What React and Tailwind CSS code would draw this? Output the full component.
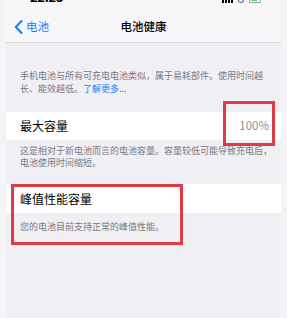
import React from 'react';

const font = { fontFamily: '"Noto Sans CJK SC", "Noto Sans", sans-serif' };

function StatusBar() {
  return (
    <div className="h-[12px] relative overflow-hidden bg-[#f7f7f9]">
      <div className="absolute left-[24px] top-[-13px] text-[13px] font-bold text-black tracking-tight">22:25</div>
      <div className="absolute right-[20px] top-[-3px] flex items-center gap-[5px]">
        <div className="flex gap-[1px]">
          <span className="w-[2px] h-[5px] bg-black" />
          <span className="w-[2px] h-[5px] bg-black" />
          <span className="w-[2px] h-[5px] bg-black" />
          <span className="w-[2px] h-[5px] bg-black" />
        </div>
        <span className="w-[6px] h-[5px] rounded-b-full border border-gray-500 border-t-0" />
        <div className="flex items-center w-[12px] h-[6px] border border-gray-400 rounded-[1px] p-[1px]">
          <span className="h-full w-[6px] bg-[#4cd964]" />
        </div>
      </div>
    </div>
  );
}

export default function App() {
  return (
    <div className="w-[287px] h-[318px] overflow-hidden bg-[#f4f4f6] relative" style={font}>
      <div className="mx-[6px] h-full bg-[#efeff4] flex flex-col">
        <StatusBar />

        <div className="h-[31px] bg-[#f7f7f9] border-b border-[#d8d8dc] flex items-center relative">
          <div className="flex items-center pl-[8px] text-[#147efb]">
            <svg width="9" height="14" viewBox="0 0 9 14" fill="none">
              <path d="M7.5 1 L1.8 7 L7.5 13" stroke="#147efb" strokeWidth="2" strokeLinecap="round" strokeLinejoin="round" />
            </svg>
            <span className="ml-[3px] text-[11.5px]">电池</span>
          </div>
          <div className="absolute left-0 right-0 text-center text-[11.5px] font-medium text-black pointer-events-none">电池健康</div>
        </div>

        <div className="pl-[14px] pr-[18px] pt-[27px] text-[9px] leading-[12.5px] text-[#7a7a7f]">
          手机电池与所有可充电电池类似，属于易耗部件。使用时间越长、能效越低。<span className="text-[#147efb]">了解更多...</span>
        </div>

        <div className="mt-[17px] h-[28px] bg-white flex items-center justify-between pl-[14px] pr-[12px]">
          <span className="text-[12px] text-black">最大容量</span>
          <span className="text-[11.5px] text-[#8e8e93]">100%</span>
        </div>

        <div className="pl-[14px] pr-[6px] pt-[5px] text-[9px] leading-[12px] text-[#7a7a7f]">
          这是相对于新电池而言的电池容量。容量较低可能导致充电后，电池使用时间缩短。
        </div>

        <div className="mt-[15px] h-[29px] bg-white flex items-center pl-[14px]">
          <span className="text-[12px] text-black">峰值性能容量</span>
        </div>

        <div className="px-[14px] pt-[8px] text-[9px] leading-[12px] text-[#7a7a7f]">
          您的电池目前支持正常的峰值性能。
        </div>
      </div>

      <div className="absolute left-[223px] top-[101px] w-[52px] h-[45px] border-[3px] border-[#e23a44]" />
      <div className="absolute left-[11px] top-[184px] w-[172px] h-[61px] border-[3px] border-[#e23a44]" />
    </div>
  );
}
